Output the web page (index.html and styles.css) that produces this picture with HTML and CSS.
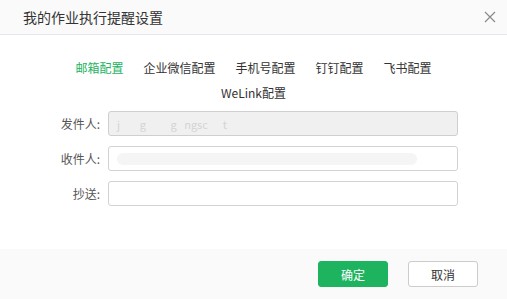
FILE: index.html
```html
<!DOCTYPE html>
<html lang="zh-CN">
<head>
  <meta charset="UTF-8" />
  <meta name="viewport" content="width=device-width, initial-scale=1.0"/>
  <title>我的作业执行提醒设置</title>
  <link rel="stylesheet" href="styles.css">
</head>
<body>
  <div class="dialog">
    <div class="dialog-header">
      <span class="dialog-title">我的作业执行提醒设置</span>
      <svg class="close" width="12" height="12" viewBox="0 0 12 12">
        <path d="M1 1 L11 11 M11 1 L1 11" stroke="#8a8a8a" stroke-width="1.2" fill="none"/>
      </svg>
    </div>

    <div class="dialog-body">
      <div class="tabs">
        <span class="tab active">邮箱配置</span>
        <span class="tab">企业微信配置</span>
        <span class="tab">手机号配置</span>
        <span class="tab">钉钉配置</span>
        <span class="tab">飞书配置</span>
        <span class="tab">WeLink配置</span>
      </div>

      <div class="form">
        <div class="row">
          <label>发件人:</label>
          <div class="input disabled"><span class="blur">j&nbsp;&nbsp;&nbsp;&nbsp;&nbsp;&nbsp;&nbsp;&nbsp;g&nbsp;&nbsp;&nbsp;&nbsp;&nbsp;&nbsp;&nbsp;&nbsp;&nbsp;&nbsp;g&nbsp;&nbsp;&nbsp;ngsc&nbsp;&nbsp;&nbsp;&nbsp;&nbsp;&nbsp;t</span></div>
        </div>
        <div class="row">
          <label>收件人:</label>
          <div class="input"><span class="smudge"></span></div>
        </div>
        <div class="row">
          <label>抄送:</label>
          <div class="input"></div>
        </div>
      </div>
    </div>

    <div class="dialog-footer">
      <button class="btn primary">确定</button>
      <button class="btn">取消</button>
    </div>
  </div>
</body>
</html>
```

FILE: styles.css
```css
body {
  margin: 0;
  font-family: "Noto Sans CJK SC", "Liberation Sans", sans-serif;
  background: #fff;
  color: #333;
}

.dialog {
  width: 507px;
  height: 299px;
  display: flex;
  flex-direction: column;
}

.dialog-header {
  height: 34px;
  background: #fafafa;
  border-bottom: 1px solid #e6e6ee;
  display: flex;
  align-items: center;
  justify-content: space-between;
  padding: 0 11px 0 23px;
}

.dialog-title {
  font-size: 14px;
  color: #333;
}

.dialog-body {
  flex: 1;
  padding-top: 24px;
}

.tabs {
  display: flex;
  flex-wrap: wrap;
  justify-content: center;
  column-gap: 20px;
  row-gap: 7px;
  padding: 0 70px;
  font-size: 12px;
  line-height: 18px;
}

.tab {
  color: #333;
}

.tab.active {
  color: #1db35f;
}

.form {
  margin-top: 9px;
  display: flex;
  flex-direction: column;
  gap: 10px;
}

.row {
  display: flex;
  align-items: center;
}

.row label {
  width: 108px;
  text-align: right;
  font-size: 12px;
  color: #555;
  padding-right: 8px;
  box-sizing: border-box;
}

.input {
  width: 350px;
  height: 25px;
  box-sizing: border-box;
  border: 1px solid #d2d2d2;
  border-radius: 3px;
  background: #fff;
  display: flex;
  align-items: center;
  padding-left: 8px;
  overflow: hidden;
}

.input.disabled {
  background: #f0f0f0;
  border-color: #cfcfcf;
}

.blur {
  font-size: 11px;
  color: #d4d4d4;
  white-space: nowrap;
}

.smudge {
  width: 300px;
  height: 12px;
  border-radius: 6px;
  background: #f5f5f5;
}

.dialog-footer {
  height: 50px;
  background: #fafafa;
  display: flex;
  align-items: center;
  justify-content: flex-end;
  gap: 20px;
  padding-right: 29px;
}

.btn {
  width: 70px;
  height: 26px;
  border: 1px solid #cccccc;
  border-radius: 3px;
  background: #fff;
  color: #333;
  font-family: inherit;
  font-size: 12px;
  cursor: pointer;
}

.btn.primary {
  background: #1db35f;
  border-color: #1db35f;
  color: #fff;
}
```
